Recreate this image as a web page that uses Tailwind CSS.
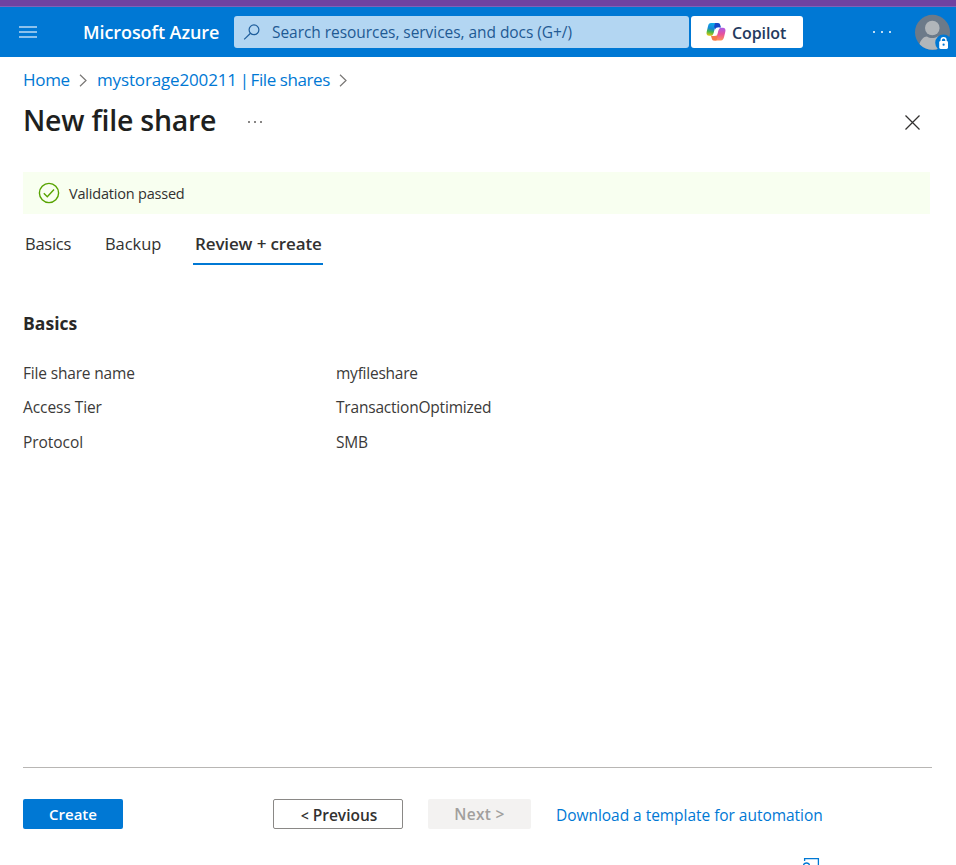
<!DOCTYPE html>
<html lang="en">
<head>
<meta charset="utf-8">
<title>New file share - Microsoft Azure</title>
<script src="https://cdn.jsdelivr.net/npm/@tailwindcss/browser@4"></script>
</head>
<body class="flex h-[865px] w-[956px] flex-col overflow-hidden bg-white font-['Open_Sans','Noto_Sans',sans-serif] text-[#323130]">
  <header class="shrink-0">
    <div class="h-[6px] bg-[#6f42a1]"></div>
    <div class="h-px bg-[#7f62b8]"></div>
    <div class="flex h-[50px] items-center bg-[#0078d4]">
      <button class="ml-[19px] flex h-[12px] w-[18px] flex-col justify-between" aria-label="Menu">
        <span class="h-[2px] w-full bg-[#8cc1ec]"></span>
        <span class="h-[2px] w-full bg-[#8cc1ec]"></span>
        <span class="h-[2px] w-full bg-[#8cc1ec]"></span>
      </button>
      <div class="ml-[46px] w-[151px] whitespace-nowrap text-[18px] font-semibold tracking-[-0.08px] text-white">Microsoft Azure</div>
      <div class="flex h-8 w-[455px] items-center rounded-[3px] bg-[#b3d6f2] pl-[9px]">
        <svg class="h-[18px] w-[18px] shrink-0" viewBox="0 0 18 18" fill="none" stroke="#1f5e9c" stroke-width="1.2"><circle cx="11" cy="6.8" r="4.9"/><path d="M7.5 10.3L1.2 16.4"/></svg>
        <span class="ml-[11px] whitespace-nowrap pt-[2px] text-[15.5px] tracking-[-0.05px] text-[#1f5a94]">Search resources, services, and docs (G+/)</span>
      </div>
      <button class="ml-[2px] flex h-8 w-[112px] items-center rounded-[3px] bg-white pl-[15px]">
        <svg class="h-5 w-5 shrink-0" viewBox="0 0 20 20">
          <defs>
            <linearGradient id="left" x1=".3" y1="0" x2=".1" y2="1"><stop offset="0" stop-color="#10a8e8"/><stop offset=".4" stop-color="#1687d8"/><stop offset=".65" stop-color="#45b649"/><stop offset="1" stop-color="#f4c80b"/></linearGradient>
            <linearGradient id="right" x1="0" y1="0" x2="0" y2="1"><stop offset="0" stop-color="#a85be8"/><stop offset=".5" stop-color="#e7519b"/><stop offset="1" stop-color="#ff9258"/></linearGradient>
          </defs>
          <path d="M5 1H12.3C10.6 1.4 10 2.6 9.5 4.2L7.6 11C7 13 6.2 13.8 4.6 13.8H3.2C.8 13.8.1 12.1.7 9.8L2 4.2C2.5 2.2 3.3 1 5 1Z" fill="url(#left)"/>
          <path d="M9.3 1H12C13.4 1 13.9 1.9 14.3 3.3L15 5.6H12.3C10.8 5.6 10 6.3 9.5 7.7L8.1 4.8C8.5 3 8.8 1.4 9.3 1Z" fill="#1748c8"/>
          <path d="M15 18.5H7.7C9.4 18.1 10 16.9 10.5 15.3L12.4 8.5C13 6.5 13.8 5.7 15.4 5.7H16.8C19.2 5.7 19.9 7.4 19.3 9.7L18 15.3C17.5 17.3 16.7 18.5 15 18.5Z" fill="url(#right)"/>
          <path d="M10.2 18.5H8C6.6 18.5 6.1 17.6 5.7 16.2L5 13.9H7.7C9.2 13.9 10 13.2 10.5 11.8L11.6 14.2C11.1 16.2 10.9 18.1 10.2 18.5Z" fill="#f47a4a"/>
          <path d="M11 5.8H13.3C12.5 6.7 12.2 8 11.8 9.3L10.6 13.7H7.1C7.8 12.9 8.1 11.7 8.5 10.3L9.4 7.3C9.8 6.2 10.2 5.8 11 5.8Z" fill="#fff"/>
        </svg>
        <span class="ml-[6px] pt-px text-[16px] font-semibold tracking-[-0.09px] text-[#243a5e]">Copilot</span>
      </button>
      <button class="ml-[70px] flex w-[18px] justify-between" aria-label="More">
        <span class="size-[2px] rounded-full bg-white"></span><span class="size-[2px] rounded-full bg-white"></span><span class="size-[2px] rounded-full bg-white"></span>
      </button>
      <svg class="ml-[24px] h-[36px] w-[36px] shrink-0" viewBox="0 0 36 36">
        <defs><clipPath id="disc"><circle cx="17.5" cy="18.3" r="17.5"/></clipPath></defs>
        <g clip-path="url(#disc)"><rect width="36" height="36" fill="#6c7a89"/><circle cx="17.3" cy="14" r="7.3" fill="#b1b6ba"/><path d="M3.5 36C4 27 8 22.5 12 22.5C15 24.5 19.5 24.5 22.5 22.5C27 23 30.5 27 31 36Z" fill="#b1b6ba"/></g>
        <circle cx="28.5" cy="28.8" r="8.3" fill="#0078d4"/>
        <rect x="24.2" y="27" width="8.8" height="8" rx="1.4" fill="#fff"/><path d="M26.2 27.5V26.2a2.4 2.4 0 0 1 4.8 0V27.5" fill="none" stroke="#fff" stroke-width="1.4"/><circle cx="28.6" cy="30.7" r="1.1" fill="#0078d4"/>
      </svg>
    </div>
  </header>

  <main class="flex flex-1 flex-col pl-[23px]">
    <nav class="mt-[11px] flex h-6 items-center whitespace-nowrap text-[17px] text-[#0078d4]">
      <a class="w-[56px] tracking-[-0.3px]">Home</a>
      <svg class="h-[13px] w-2" viewBox="0 0 8 13" fill="none" stroke="#797775" stroke-width="1.2"><path d="M1 .8L7 6.5L1 12.2"/></svg>
      <a class="ml-[10px] w-[242px] tracking-[-0.42px]"><span class="tracking-[-0.15px]">mystorage200211</span><span class="tracking-[-1.5px]"> | </span>File shares</a>
      <svg class="h-[13px] w-2" viewBox="0 0 8 13" fill="none" stroke="#797775" stroke-width="1.2"><path d="M1 .8L7 6.5L1 12.2"/></svg>
    </nav>
    <div class="mt-[7px] flex h-[42px] items-center">
      <h1 class="w-[226px] whitespace-nowrap text-[28.5px] font-semibold leading-[42px] tracking-[-0.24px] text-[#201f1e]">New file share</h1>
      <div class="mt-[4px] -ml-px flex w-[14px] justify-between"><span class="size-[2px] rounded-full bg-[#605e5c]"></span><span class="size-[2px] rounded-full bg-[#605e5c]"></span><span class="size-[2px] rounded-full bg-[#605e5c]"></span></div>
      <svg class="mt-[4px] ml-[643px] h-[15px] w-[15px]" viewBox="0 0 15 15" fill="none" stroke="#323130" stroke-width="1.25"><path d="M.5.5L14.5 14.5M14.5.5L.5 14.5"/></svg>
    </div>

    <div class="mt-[31px] flex h-[42px] w-[907px] items-center bg-[#f8fff0] pl-[15px]">
      <svg class="h-[22px] w-[22px]" viewBox="0 0 22 22" fill="none" stroke="#57a300" stroke-width="1.4"><circle cx="11" cy="11" r="9.6"/><path d="M5.8 11.2L9.3 14.7L16 7.6"/></svg>
      <span class="ml-[9px] pt-[2px] text-[14.5px] tracking-[-0.2px]">Validation passed</span>
    </div>

    <div class="mt-[10px] flex h-[41px] whitespace-nowrap text-[16.5px] leading-[40px]" role="tablist">
      <span class="ml-px w-[80px] pl-px tracking-[-0.25px]">Basics</span>
      <span class="w-[89px] pl-px tracking-[-0.05px]">Backup</span>
      <span class="w-[130px] border-b-2 border-[#0078d4] pl-[2px] text-[17px] font-semibold tracking-[-0.13px]">Review + create</span>
    </div>

    <h2 class="mt-[46px] h-6 text-[17.5px] font-bold leading-6 tracking-[0.05px] text-[#292827]">Basics</h2>
    <dl class="mt-[21px] grid grid-cols-[313px_1fr] auto-rows-[34.5px] items-center text-[15.5px] tracking-[-0.17px] text-[#3b3a39]">
      <dt>File share name</dt><dd class="tracking-[-0.24px]">myfileshare</dd>
      <dt class="tracking-[-0.07px]">Access Tier</dt><dd class="tracking-[-0.2px]">TransactionOptimized</dd>
      <dt class="tracking-[-0.05px]">Protocol</dt><dd>SMB</dd>
    </dl>

    <footer class="mt-auto h-[98px] w-[909px] border-t border-[#b8b6b4] pt-[31px]">
      <div class="flex h-[30px] items-center whitespace-nowrap">
        <button class="h-[30px] w-[100px] rounded-[2px] bg-[#0078d4] text-[15px] font-semibold text-white">Create</button>
        <button class="ml-[150px] h-[30px] w-[130px] rounded-[2px] border border-[#8a8886] pt-[3px] pl-[2px] text-[15.5px] font-semibold"><span class="text-[14px]">&lt;</span> Previous</button>
        <button class="ml-[25px] h-[30px] w-[103px] rounded-[2px] bg-[#f3f2f1] pt-[2px] text-[15.5px] font-semibold tracking-[0.3px] text-[#a19f9d]" disabled>Next &gt;</button>
        <a class="ml-[25px] pt-[4px] text-[15.5px] tracking-[-0.04px] text-[#0078d4]">Download a template for automation</a>
      </div>
      <svg class="mt-[28px] ml-[779px] h-[8px] w-[18px]" viewBox="0 0 18 8" fill="none" stroke="#0078d4" stroke-width="1.3"><path d="M2.6 4V1.6H16.4V8"/><circle cx="4.5" cy="9" r="3"/></svg>
    </footer>
  </main>
</body>
</html>
